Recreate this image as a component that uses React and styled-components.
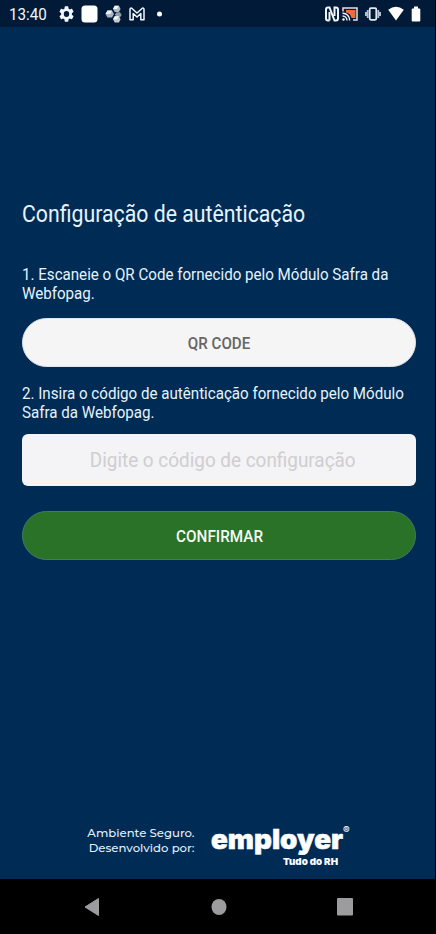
import React from 'react'
import styled, { createGlobalStyle } from 'styled-components'

const GlobalStyle = createGlobalStyle`
  * {
    box-sizing: border-box;
  }
  body {
    margin: 0;
    background: #000;
    font-family: Roboto, "Liberation Sans", sans-serif;
  }
`

const Screen = styled.div`
  width: 436px;
  height: 934px;
  display: flex;
  flex-direction: column;
  overflow: hidden;
  background: #000;
`

const StatusBar = styled.header`
  height: 27px;
  margin-right: 1px;
  padding: 0 14px 0 9px;
  display: flex;
  align-items: center;
  justify-content: space-between;
  background: #001a38;
  color: #f2f7fc;
`

const StatusGroup = styled.div`
  display: flex;
  align-items: center;
  gap: ${props => props.gap || '0'};
`

const Clock = styled.span`
  width: 50px;
  padding-top: 2px;
  font-size: 16px;
  line-height: 20px;
`

const Icon = styled.svg`
  display: block;
  flex: none;
`

const Content = styled.main`
  flex: 1;
  margin-right: 1px;
  padding: 175px 19px 0 21.5px;
  display: flex;
  flex-direction: column;
  background: #002b55;
  color: #e6f3fc;
`

// Roboto drawn a little narrower than its natural width
const Narrow = styled.span`
  display: inline-block;
  white-space: nowrap;
  transform: scaleX(${props => props.scale || 0.945});
  transform-origin: ${props => props.origin || 'left'};
`

const Title = styled.h1`
  margin: 0;
  height: 26px;
  font-size: 23px;
  font-weight: 400;
  line-height: 26px;
`

const Step = styled.p`
  margin: ${props => props.top} 0 0;
  display: flex;
  flex-direction: column;
  align-items: flex-start;
  font-size: 16px;
  line-height: 19px;
`

const Button = styled.button`
  width: 394.5px;
  height: 49px;
  margin: ${props => props.top} 0 0;
  padding: 2px 0 0 1px;
  border: 1px solid ${props => props.edge};
  border-radius: 25px;
  background: ${props => props.color};
  color: ${props => props.ink};
  font-family: inherit;
  font-size: 16px;
  font-weight: 500;
`

const CodeField = styled.label`
  width: 394.5px;
  height: 52px;
  margin-top: 12px;
  padding-left: 8px;
  display: flex;
  align-items: center;
  justify-content: center;
  border-radius: 6px;
  background: #f4f3f5;
  color: #cfced1;
  font-size: 21px;
`

const Footer = styled.footer`
  margin: auto 0 9px;
  padding-left: 64px;
  height: 46px;
  display: flex;
  align-items: flex-start;
`

const Credit = styled.div`
  width: 109px;
  margin-right: 16.5px;
  padding-top: 2px;
  color: #e2eefa;
  font-family: Montserrat, Inter, sans-serif;
  font-size: 11.7px;
  font-weight: 500;
  line-height: 15px;
  text-align: right;
  white-space: nowrap;
`

const Logo = styled.svg`
  display: block;
  overflow: visible;
  fill: #fff;
  font-family: Inter, "Liberation Sans", sans-serif;
  font-weight: 900;
`

const Registered = styled.text`
  font-size: 10px;
  font-weight: 600;
`

const NavBar = styled.nav`
  height: 55px;
  padding: 0 83px 0 84px;
  display: flex;
  align-items: center;
  justify-content: space-between;
`

const Gear = () => (
  <Icon width="15" height="16" viewBox="2 2 20 20" preserveAspectRatio="none" fill="currentColor">
    <path d="M19.14 12.94c.04-.3.06-.61.06-.94s-.02-.64-.07-.94l2.03-1.58a.49.49 0 0 0 .12-.61l-1.92-3.32a.49.49 0 0 0-.59-.22l-2.39.96a7 7 0 0 0-1.62-.94l-.36-2.54A.48.48 0 0 0 13.92 2.4h-3.84a.48.48 0 0 0-.47.41l-.36 2.54a7 7 0 0 0-1.62.94l-2.39-.96a.48.48 0 0 0-.59.22L2.74 8.87a.48.48 0 0 0 .12.61l2.03 1.58a6 6 0 0 0 0 1.88l-2.03 1.58a.49.49 0 0 0-.12.61l1.92 3.32c.12.22.37.29.59.22l2.39-.96c.5.38 1.03.7 1.62.94l.36 2.54c.05.24.24.41.48.41h3.84c.24 0 .44-.17.47-.41l.36-2.54a7 7 0 0 0 1.62-.94l2.39.96c.22.08.47 0 .59-.22l1.92-3.32a.48.48 0 0 0-.12-.61zM12 15.6a3.6 3.6 0 1 1 0-7.2 3.6 3.6 0 0 1 0 7.2z" />
  </Icon>
)

const Square = () => (
  <Icon width="17" height="18">
    <rect x="0.5" y="0.5" width="16" height="17" rx="3.5" fill="#fff" />
  </Icon>
)

const Cluster = () => (
  <Icon width="17" height="18">
    <path d="M.5 9 2.500 5.500h4.500L9 9l-2 3.500H2.500z" fill="#a9b3c0" />
    <path d="m.5 9 2-3.500H7L5.500 9z" fill="#edf0f4" />
    <path d="M8 4 9.700.8h4.200L15.600 4l-1.700 3H9.700z" fill="#aeb8c4" />
    <path d="M8 4 9.700.8h4.200L12 4z" fill="#f3f5f8" />
    <path d="m10 9.500 1.500-2.300h3.500L16.700 10l-1.700 2.300h-3.500z" fill="#8f9cac" />
    <path d="M8 14.300 9.700 11.300h4.200l1.700 3-1.700 3.200H9.700z" fill="#c3cad4" />
    <path d="M8 14.300 9.700 11.300h4.200L12 14.300z" fill="#f3f5f8" />
  </Icon>
)

const Mail = () => (
  <Icon width="16" height="14" fill="none" stroke="currentColor" strokeWidth="1.500" strokeLinejoin="round">
    <path d="M1 12.800V2.500Q1 .8 2.700 1.200L8 6l5.300-4.800Q15 .8 15 2.500v10.300h-3.200V6.500L8 10 4.200 6.500v6.300z" />
  </Icon>
)

const Nfc = () => (
  <Icon width="14" height="16" fill="none" stroke="#f1f5f9" strokeWidth="2">
    <path d="M4.500 14.500H3Q1 14.500 1 12.500V3.500Q1 1.500 3 1.500h1.500L9.500 14.500H11q2 0 2-2V3.500Q13 1.500 11 1.500H9.500V10" />
    <path d="M4.500 6v8.500" />
  </Icon>
)

const Cast = () => (
  <Icon width="16" height="14">
    <path d="M4 3h9.500v8H9.500A7 7 0 0 0 4 5.500z" fill="#f2693c" />
    <path d="M1 4.500V1h14v12h-4" fill="none" stroke="#e6dfe2" strokeWidth="1.500" />
    <path d="M.5 6.200a7 7 0 0 1 7.200 7.300M.5 9a4.500 4.500 0 0 1 4.500 4.500" fill="none" stroke="#f3f5f8" strokeWidth="1.400" />
    <circle cx="1.500" cy="12.500" r="1.200" fill="#fff" />
  </Icon>
)

const Vibrate = () => (
  <Icon width="16" height="14" fill="none" stroke="#b3c0d0" strokeWidth="1.800">
    <rect x="4.700" y="1.200" width="6.600" height="11.600" rx="1.200" stroke="#e3e9f0" />
    <path d="M2.700 3v8M.9 5v4M13.300 3v8M15.100 5v4" />
  </Icon>
)

const Wifi = () => (
  <Icon width="16" height="15">
    <path d="M.2 3.800Q8-2.500 15.800 3.800L8 14.500z" fill="#fff" />
  </Icon>
)

const Battery = () => (
  <Icon width="10" height="16">
    <path d="M3 .5h4v2h1.300q1 0 1 1v11q0 1-1 1H1.700q-1 0-1-1v-11q0-1 1-1H3z" fill="#fff" />
  </Icon>
)

const App = () => (
  <Screen>
    <GlobalStyle />
    <StatusBar>
      <StatusGroup>
        <Clock><Narrow scale={0.95}>13:40</Narrow></Clock>
        <StatusGroup gap="7px">
          <Gear />
          <Square />
          <Cluster />
          <Mail />
          <Icon width="15" height="6"><circle cx="7.500" cy="3" r="2.500" fill="#fff" /></Icon>
        </StatusGroup>
      </StatusGroup>
      <StatusGroup gap="7px">
        <StatusGroup gap="3px">
          <Nfc />
          <Cast />
        </StatusGroup>
        <Vibrate />
        <Wifi />
        <Battery />
      </StatusGroup>
    </StatusBar>
    <Content>
      <Title><Narrow scale={0.925}>Configuração de autênticação</Narrow></Title>
      <Step top="37px">
        <Narrow>1. Escaneie o QR Code fornecido pelo Módulo Safra da</Narrow>
        <Narrow>Webfopag.</Narrow>
      </Step>
      <Button top="15px" color="#f5f5f5" edge="#dfe5ea" ink="#666">
        <Narrow origin="center">QR CODE</Narrow>
      </Button>
      <Step top="17px">
        <Narrow>2. Insira o código de autênticação fornecido pelo Módulo</Narrow>
        <Narrow>Safra da Webfopag.</Narrow>
      </Step>
      <CodeField>
        <Narrow scale={0.9} origin="center">Digite o código de configuração</Narrow>
      </CodeField>
      <Button top="24.5px" color="#2a7227" edge="#3f7d62" ink="#f4faf4">
        <Narrow scale={0.955} origin="center">CONFIRMAR</Narrow>
      </Button>
      <Footer>
        <Credit>
          Ambiente Seguro.<br />
          Desenvolvido por:
        </Credit>
        <Logo width="140" height="46">
          <text x="0" y="25" fontSize="26.500" textLength="132" lengthAdjust="spacingAndGlyphs" stroke="#fff" strokeWidth="0.500">employer</text>
          <Registered x="132" y="10">®</Registered>
          <text x="72" y="41" fontSize="9.500" textLength="55" lengthAdjust="spacingAndGlyphs">Tudo do RH</text>
        </Logo>
      </Footer>
    </Content>
    <NavBar>
      <Icon width="16" height="20"><path d="M1 10 14.500 1.500v17z" fill="#9c9c9e" stroke="#9c9c9e" strokeLinejoin="round" /></Icon>
      <Icon width="16" height="18"><ellipse cx="8" cy="9" rx="7.500" ry="8" fill="#9c9c9e" /></Icon>
      <Icon width="16" height="18"><rect width="16" height="17.500" rx="1" fill="#9c9c9e" /></Icon>
    </NavBar>
  </Screen>
)

export default App
